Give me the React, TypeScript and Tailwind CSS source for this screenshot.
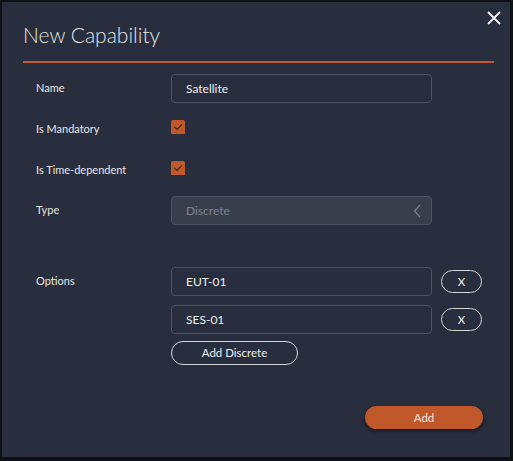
import React from 'react';

const font = { fontFamily: 'Lato, "Noto Sans", sans-serif' };

function Check() {
  return (
    <div className="w-[14px] h-[14px] bg-[#c0582a] rounded-t-[2px] flex items-center justify-center">
      <svg width="10" height="10" viewBox="0 0 10 10" fill="none">
        <path d="M1.5 5.2 L4 7.5 L8.6 2.6" stroke="#3a2a26" strokeWidth="1.1" strokeLinecap="round" strokeLinejoin="round" />
      </svg>
    </div>
  );
}

function TextBox({ value }: { value: string }) {
  return (
    <div className="w-[261px] h-[29px] border border-[#4a5263] rounded-[4px] flex items-center pl-[14px] text-[12px] text-[#eeeeee]">
      {value}
    </div>
  );
}

function PillButton({ label, className }: { label: string; className: string }) {
  return (
    <button className={`${className} border border-[#d6d8dc] rounded-full flex items-center justify-center text-[11.5px] text-[#eeeeee]`}>
      {label}
    </button>
  );
}

export default function App() {
  return (
    <div className="w-[513px] h-[461px] bg-[#0f1013] p-[2px]" style={font}>
      <div className="relative w-[508px] h-[455px] bg-[#282e3d] pl-[21px] pr-[16px]">
        <button className="absolute right-[8px] top-[8px] text-[#f2f2f2]">
          <svg width="16" height="16" viewBox="0 0 16 16" fill="none">
            <path d="M2 2 L14 14 M14 2 L2 14" stroke="currentColor" strokeWidth="1.8" />
          </svg>
        </button>

        <div className="h-[59px] pt-[19px] text-[21px] font-light text-[#e4e4e4] leading-[28px]">
          New Capability
        </div>
        <div className="h-[2px] bg-[#c9592a] w-[471px]" />

        <div className="pl-[13px] text-[11px] text-[#e6e6e6]">
          <div className="flex items-center h-[29px] mt-[11px]">
            <div className="w-[135px]">Name</div>
            <TextBox value="Satellite" />
          </div>

          <div className="flex h-[28px] mt-[12px]">
            <div className="w-[135px] self-center">Is Mandatory</div>
            <div className="mt-[5px]"><Check /></div>
          </div>

          <div className="flex h-[28px] mt-[13px]">
            <div className="w-[135px] self-center">Is Time-dependent</div>
            <div className="mt-[5px]"><Check /></div>
          </div>

          <div className="flex items-center h-[29px] mt-[12px]">
            <div className="w-[135px]">Type</div>
            <div className="w-[261px] h-[29px] border border-[#4a5263] bg-[#393e4d] rounded-[4px] flex items-center justify-between pl-[14px] pr-[10px] text-[12px] text-[#7d828e]">
              <span>Discrete</span>
              <svg width="8" height="14" viewBox="0 0 8 14" fill="none">
                <path d="M7 1 L1.5 7 L7 13" stroke="#7d828e" strokeWidth="1.2" />
              </svg>
            </div>
          </div>

          <div className="flex mt-[42px]">
            <div className="w-[135px] h-[29px] flex items-center">Options</div>
            <div className="flex flex-col">
              <div className="flex items-center gap-[9px]">
                <TextBox value="EUT-01" />
                <PillButton label="X" className="w-[41px] h-[23px]" />
              </div>
              <div className="flex items-center gap-[9px] mt-[9px]">
                <TextBox value="SES-01" />
                <PillButton label="X" className="w-[41px] h-[23px]" />
              </div>
              <PillButton label="Add Discrete" className="w-[127px] h-[24px] mt-[7px]" />
            </div>
          </div>
        </div>

        <div className="flex justify-end pr-[11px] mt-[41px]">
          <button className="w-[118px] h-[23px] rounded-full bg-[#c0582a] text-[11.5px] text-[#f4e6e0] shadow-[0_2px_4px_rgba(0,0,0,0.5)]">
            Add
          </button>
        </div>
      </div>
    </div>
  );
}
